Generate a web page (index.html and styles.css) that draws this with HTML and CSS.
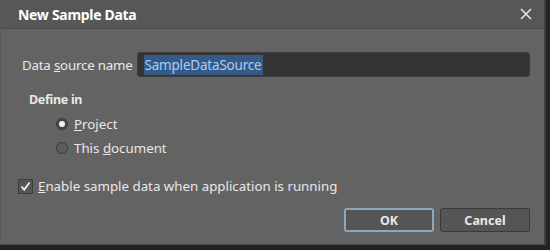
FILE: index.html
```html
<!DOCTYPE html>
<html lang="en">
<head>
    <meta charset="UTF-8">
    <title>New Sample Data</title>
    <link rel="stylesheet" href="styles.css">
</head>
<body>
    <div class="dialog">
        <div class="titlebar">
            <span class="title">New Sample Data</span>
            <svg class="close" width="12" height="12" viewBox="0 0 12 12">
                <path d="M1 1 L11 11 M11 1 L1 11" stroke="#e6e6e6" stroke-width="1.6" fill="none"/>
            </svg>
        </div>

        <div class="content">
            <div class="name-row">
                <label>Data <u>s</u>ource name</label>
                <div class="input"><span class="selected">SampleDataSource</span></div>
            </div>

            <div class="group-title">Define in</div>
            <div class="radios">
                <div class="radio-row">
                    <span class="radio checked"></span>
                    <span><u>P</u>roject</span>
                </div>
                <div class="radio-row">
                    <span class="radio"></span>
                    <span>This <u>d</u>ocument</span>
                </div>
            </div>

            <div class="check-row">
                <span class="checkbox">
                    <svg width="13" height="13" viewBox="0 0 13 13">
                        <path d="M2.5 6.5 L5.2 9.8 L10.5 2.5" stroke="#f2f2f2" stroke-width="1.8" fill="none"/>
                    </svg>
                </span>
                <span><u>E</u>nable sample data when application is running</span>
            </div>

            <div class="buttons">
                <button class="btn btn-default">OK</button>
                <button class="btn">Cancel</button>
            </div>
        </div>
    </div>
</body>
</html>
```
FILE: styles.css
```css
* {
    margin: 0;
    padding: 0;
    box-sizing: border-box;
}

body {
    background: #222;
    font-family: 'Noto Sans', 'Open Sans', sans-serif;
    color: #e8e8e8;
    width: 550px;
    height: 250px;
    overflow: hidden;
}

.dialog {
    width: 546px;
    height: 245px;
    background: #636363;
    border-left: 1px solid #5a5a5a;
    border-right: 2px solid #3e3e3e;
    border-bottom: 1px solid #4a4a4a;
    display: flex;
    flex-direction: column;
}

.titlebar {
    height: 29px;
    background: #575757;
    border-bottom: 1px solid #4d4d4d;
    display: flex;
    align-items: center;
    justify-content: space-between;
    padding: 0 12px 0 17px;
}

.title {
    font-weight: bold;
    font-size: 14px;
    color: #fff;
    letter-spacing: -0.3px;
}

.content {
    padding: 23px 14px 0 21px;
    font-size: 13.3px;
}

.name-row {
    display: flex;
    align-items: center;
    gap: 4px;
}

.name-row label {
    letter-spacing: -0.2px;
}

.input {
    flex: 1;
    height: 25px;
    background: #333;
    border-radius: 3px;
    border: 1px solid #3d3d3d;
    display: flex;
    align-items: center;
    padding-left: 6px;
}

.selected {
    background: #365a86;
    color: #a8cdf5;
    padding: 1px 1px;
    font-size: 13.5px;
    letter-spacing: -0.2px;
}

.group-title {
    margin: 14px 0 0 7px;
    font-weight: bold;
    font-size: 12.5px;
    letter-spacing: -0.3px;
}

.radios {
    margin: 7px 0 0 34px;
    display: flex;
    flex-direction: column;
    gap: 7px;
}

.radio-row {
    display: flex;
    align-items: center;
    gap: 6px;
    height: 17px;
}

.radio {
    width: 12px;
    height: 12px;
    border-radius: 50%;
    border: 1px solid #3c3c3c;
    background: #5c5c5c;
    position: relative;
}

.radio.checked {
    background: #484848;
    border-color: #3a3a3a;
}

.radio.checked::after {
    content: '';
    position: absolute;
    left: 2px;
    top: 2px;
    width: 6px;
    height: 6px;
    border-radius: 50%;
    background: #f2f2f2;
}

.check-row {
    margin: 21px 0 0 -4px;
    display: flex;
    align-items: center;
    gap: 5px;
}

.checkbox {
    width: 15px;
    height: 15px;
    border: 1px solid #3c3c3c;
    background: #555;
    display: flex;
    align-items: center;
    justify-content: center;
}

.buttons {
    margin-top: 13px;
    display: flex;
    justify-content: flex-end;
    gap: 6px;
}

.btn {
    width: 90px;
    height: 24px;
    background: #555;
    border: 1px solid #3a3a3a;
    border-radius: 3px;
    color: #e8e8e8;
    font-family: inherit;
    font-size: 12.5px;
    font-weight: bold;
}

.btn-default {
    border: 2px solid #8ea7bd;
}
```
